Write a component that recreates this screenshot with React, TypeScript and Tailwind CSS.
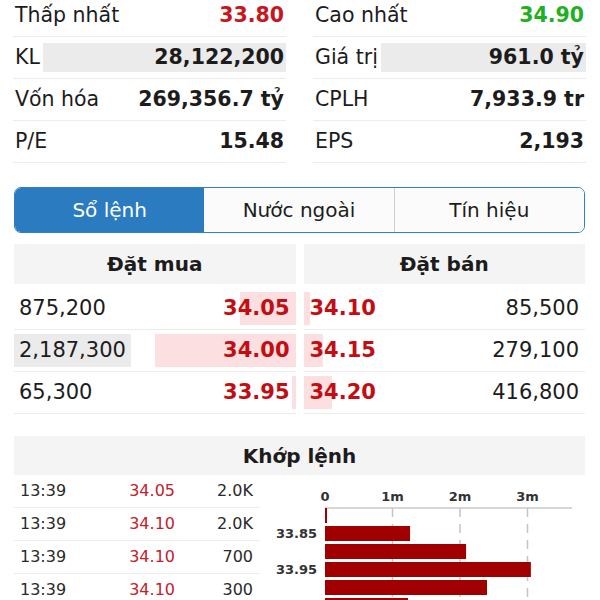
import React from "react";

const STATS = [
  { label: "Thấp nhất", value: "33.80", tone: "text-[#c8161d]" },
  { label: "Cao nhất", value: "34.90", tone: "text-[#22b022]" },
  { label: "KL", value: "28,122,200", highlight: true },
  { label: "Giá trị", value: "961.0 tỷ", highlight: true },
  { label: "Vốn hóa", value: "269,356.7 tỷ" },
  { label: "CPLH", value: "7,933.9 tr" },
  { label: "P/E", value: "15.48" },
  { label: "EPS", value: "2,193" },
];

const BIDS = [
  { qty: "875,200", price: "34.05", bar: 56 },
  { qty: "2,187,300", price: "34.00", bar: 141, top: true },
  { qty: "65,300", price: "33.95", bar: 4 },
];

const ASKS = [
  { qty: "85,500", price: "34.10", bar: 6 },
  { qty: "279,100", price: "34.15", bar: 19 },
  { qty: "416,800", price: "34.20", bar: 28 },
];

const TRADES = [
  { time: "13:39", price: "34.05", vol: "2.0K" },
  { time: "13:39", price: "34.10", vol: "2.0K" },
  { time: "13:39", price: "34.10", vol: "700" },
  { time: "13:39", price: "34.10", vol: "300" },
];

// volume by price, in millions
const VOLUMES = [0.03, 1.26, 2.09, 3.05, 2.4, 1.23];

function StatRow({ label, value, tone, highlight }: { label: string; value: string; tone?: string; highlight?: boolean }) {
  return (
    <div className="h-[42px] flex items-center border-b border-[#ececec]">
      <span className="pl-[2px] whitespace-nowrap">{label}</span>
      <span
        className={`ml-[3px] flex-1 h-[29px] flex items-center justify-end pr-[2px] font-bold whitespace-nowrap ${
          highlight ? "bg-[#ebebeb]" : ""
        } ${tone ?? "text-[#1c1c1c]"}`}
      >
        {value}
      </span>
    </div>
  );
}

function VolumeChart() {
  const x0 = 55;
  const unit = 67.5;
  return (
    <svg width="315" height="125" className="block">
      {[0, 1, 2, 3].map((t) => (
        <text
          key={t}
          x={x0 + t * unit}
          y={26}
          textAnchor="middle"
          fontFamily="DejaVu Sans, sans-serif"
          fontWeight="bold"
          fontSize="13"
          fill="#333"
        >
          {t === 0 ? "0" : `${t}m`}
        </text>
      ))}
      <line x1={x0} x2={302} y1={33} y2={33} stroke="#c8c8c8" strokeWidth="1.5" />
      {[1, 2, 3].map((t) => (
        <line
          key={t}
          x1={x0 + t * unit}
          x2={x0 + t * unit}
          y1={33}
          y2={125}
          stroke="#c4c4c4"
          strokeWidth="1.5"
          strokeDasharray="9 7"
        />
      ))}
      {VOLUMES.map((v, i) => (
        <rect key={i} x={x0} y={33 + i * 18} width={Math.max(2, v * unit)} height={15} fill="#a00000" />
      ))}
      {[
        { label: "33.85", i: 1 },
        { label: "33.95", i: 3 },
      ].map((l) => (
        <text
          key={l.label}
          x={47}
          y={33 + l.i * 18 + 12}
          textAnchor="end"
          fontFamily="DejaVu Sans, sans-serif"
          fontWeight="bold"
          fontSize="13"
          fill="#333"
        >
          {l.label}
        </text>
      ))}
    </svg>
  );
}

export default function App() {
  return (
    <div className="w-[600px] h-[600px] overflow-hidden bg-white font-['DejaVu_Sans',sans-serif] text-[#1c1c1c]">
      {/* Summary stats */}
      <div className="-mt-[5px] pl-[13px] pr-[14px] grid grid-cols-2 gap-x-[27px] text-[20.5px]">
        {STATS.map((s) => (
          <StatRow key={s.label} {...s} />
        ))}
      </div>

      {/* Tabs */}
      <div className="mt-[24px] ml-[14px] mr-[15px] h-[46px] flex border border-[#2f80c2] rounded-[7px] overflow-hidden text-[20px]">
        <div className="flex-1 flex items-center justify-center bg-[#2a7bbf] text-white">Sổ lệnh</div>
        <div className="flex-1 flex items-center justify-center bg-[#fbfbfb]">Nước ngoài</div>
        <div className="flex-1 flex items-center justify-center bg-[#fbfbfb] border-l border-[#cfcfcf]">Tín hiệu</div>
      </div>

      {/* Order book */}
      <div className="mt-[11px] ml-[14px] mr-[15px] grid grid-cols-2 gap-x-[8px]">
        <div>
          <div className="h-[40px] bg-[#f4f4f4] flex items-center justify-center font-bold text-[20px]">Đặt mua</div>
          <div className="mt-[4px]">
            {BIDS.map((b) => (
              <div key={b.price} className="relative h-[42px] flex items-center border-b border-[#ececec] text-[21px]">
                <div className="absolute top-[4px] bottom-[4px] right-0 bg-[#fcdfe1]" style={{ width: b.bar }} />
                <span className={`relative h-[33px] flex items-center px-[5px] ${b.top ? "bg-[#ebebeb]" : ""}`}>{b.qty}</span>
                <span className="relative ml-auto pr-[6px] font-bold text-[#c40d12]">{b.price}</span>
              </div>
            ))}
          </div>
        </div>
        <div>
          <div className="h-[40px] bg-[#f4f4f4] flex items-center justify-center font-bold text-[20px]">Đặt bán</div>
          <div className="mt-[4px]">
            {ASKS.map((a) => (
              <div key={a.price} className="relative h-[42px] flex items-center border-b border-[#ececec] text-[21px]">
                <div className="absolute top-[4px] bottom-[4px] left-0 bg-[#fcdfe1]" style={{ width: a.bar }} />
                <span className="relative pl-[6px] font-bold text-[#c40d12]">{a.price}</span>
                <span className="relative ml-auto pr-[6px]">{a.qty}</span>
              </div>
            ))}
          </div>
        </div>
      </div>

      {/* Matched orders */}
      <div className="mt-[22px] ml-[14px] mr-[15px] h-[39px] bg-[#f4f4f4] flex items-center justify-center font-bold text-[20px]">
        Khớp lệnh
      </div>
      <div className="ml-[14px] flex gap-[10px]">
        <div className="w-[246px]">
          {TRADES.map((t, i) => (
            <div key={i} className="h-[33px] flex items-center border-b border-[#ececec] text-[16px]">
              <span className="w-[60px] pl-[6px] text-[#2a2a2a]">{t.time}</span>
              <span className="w-[101px] text-right text-[#c4202c]">{t.price}</span>
              <span className="flex-1 text-right pr-[7px] text-[#2a2a2a]">{t.vol}</span>
            </div>
          ))}
        </div>
        <VolumeChart />
      </div>
    </div>
  );
}
